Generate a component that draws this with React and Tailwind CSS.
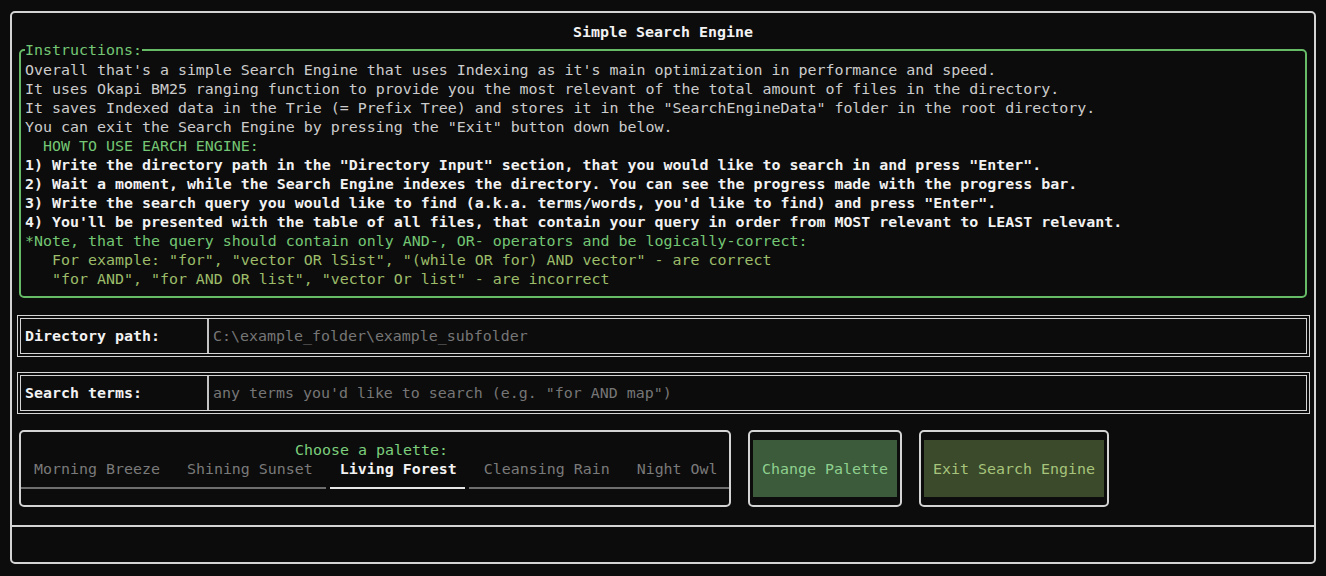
export default function App() {
  const tabs = ["Morning Breeze", "Shining Sunset", "Living Forest", "Cleansing Rain", "Night Owl"];
  return (
    <div className="w-[1326px] h-[576px] bg-[#0c0c0c] pt-[11px] pl-[10px] font-['DejaVu_Sans_Mono',monospace] text-[14.95px] leading-[19px] text-[#cccccc] whitespace-pre">
      <div className="w-[1306px] h-[553px] border-2 border-[#d4d4d4] rounded-[5px] flex flex-col">
        <div className="mt-[10px] h-[19px] text-center font-bold text-[#f2f2f2]">Simple Search Engine</div>

        <div className="relative mt-[7px] mx-[7px] h-[249px] border-2 border-[#66bb66] rounded-[5px] pt-[10px] pl-[4px]">
          <div className="absolute -top-[10px] left-[4px] h-[19px] bg-[#0c0c0c] text-[#74c774]">Instructions:</div>
          <div className="h-[19px]">Overall that's a simple Search Engine that uses Indexing as it's main optimization in performance and speed.</div>
          <div className="h-[19px]">It uses Okapi BM25 ranging function to provide you the most relevant of the total amount of files in the directory.</div>
          <div className="h-[19px]">{"It saves Indexed data in the Trie (= Prefix Tree) and stores it in the \"SearchEngineData\" folder in the root directory."}</div>
          <div className="h-[19px]">{"You can exit the Search Engine by pressing the \"Exit\" button down below."}</div>
          <div className="h-[19px] text-[#74c774]">{"  HOW TO USE EARCH ENGINE:"}</div>
          <div className="h-[19px] font-bold text-[#f2f2f2]">{"1) Write the directory path in the \"Directory Input\" section, that you would like to search in and press \"Enter\"."}</div>
          <div className="h-[19px] font-bold text-[#f2f2f2]">{"2) Wait a moment, while the Search Engine indexes the directory. You can see the progress made with the progress bar."}</div>
          <div className="h-[19px] font-bold text-[#f2f2f2]">{"3) Write the search query you would like to find (a.k.a. terms/words, you'd like to find) and press \"Enter\"."}</div>
          <div className="h-[19px] font-bold text-[#f2f2f2]">{"4) You'll be presented with the table of all files, that contain your query in order from MOST relevant to LEAST relevant."}</div>
          <div className="h-[19px] text-[#74c774]">{"*Note, that the query should contain only AND-, OR- operators and be logically-correct:"}</div>
          <div className="h-[19px] text-[#9cbc6a]">{"   For example: \"for\", \"vector OR lSist\", \"(while OR for) AND vector\" - are correct"}</div>
          <div className="h-[19px] text-[#9cbc6a]">{"   \"for AND\", \"for AND OR list\", \"vector Or list\" - are incorrect"}</div>
        </div>

        <div className="mt-[17px] ml-[5px] mr-[4px] h-[42px] border-4 border-double border-[#d4d4d4] flex">
          <div className="w-[186px] pl-[4px] pt-[8px] font-bold text-[#f2f2f2]">Directory path:</div>
          <div className="flex-1 border-l-2 border-[#c4c4c4] pl-[4px] pt-[8px] text-[#767676]">{"C:\\example_folder\\example_subfolder"}</div>
        </div>

        <div className="mt-[15px] ml-[5px] mr-[4px] h-[42px] border-4 border-double border-[#d4d4d4] flex">
          <div className="w-[186px] pl-[4px] pt-[8px] font-bold text-[#f2f2f2]">Search terms:</div>
          <div className="flex-1 border-l-2 border-[#c4c4c4] pl-[4px] pt-[8px] text-[#767676]">{"any terms you'd like to search (e.g. \"for AND map\")"}</div>
        </div>

        <div className="mt-[16px] ml-[7px] flex h-[77px]">
          <div className="w-[712px] border-2 border-[#d4d4d4] rounded-[5px] flex flex-col pt-[9px]">
            <div className="h-[19px] pl-[4px] pr-[11px] text-center text-[#7ccf7c]">Choose a palette:</div>
            <div className="h-[19px] flex pl-[4px] gap-[9px]">
              {tabs.map((t) => (
                <span
                  key={t}
                  className={t === "Living Forest" ? "px-[9px] font-bold text-[#f2f2f2]" : "px-[9px] text-[#7a7a7a]"}
                >
                  {t}
                </span>
              ))}
            </div>
            <div className="mt-[8px] flex h-[2px]">
              <div className="w-[305px] bg-[#6e6e6e]" />
              <div className="ml-[4px] w-[135px] bg-[#e6e6e6]" />
              <div className="ml-[4px] flex-1 bg-[#6e6e6e]" />
            </div>
          </div>

          <div className="ml-[17px] w-[154px] border-2 border-[#d4d4d4] rounded-[5px] px-[3px] py-[8px]">
            <div className="h-full bg-[#3b5b3b] flex items-center justify-center pt-[2px] text-[#8fd08f]">Change Palette</div>
          </div>

          <div className="ml-[17px] w-[190px] border-2 border-[#d4d4d4] rounded-[5px] px-[3px] py-[8px]">
            <div className="h-full bg-[#3b4a2a] flex items-center justify-center pt-[2px] text-[#a6c47c]">Exit Search Engine</div>
          </div>
        </div>

        <div className="mt-[18px] h-[2px] bg-[#d4d4d4]" />
      </div>
    </div>
  );
}
